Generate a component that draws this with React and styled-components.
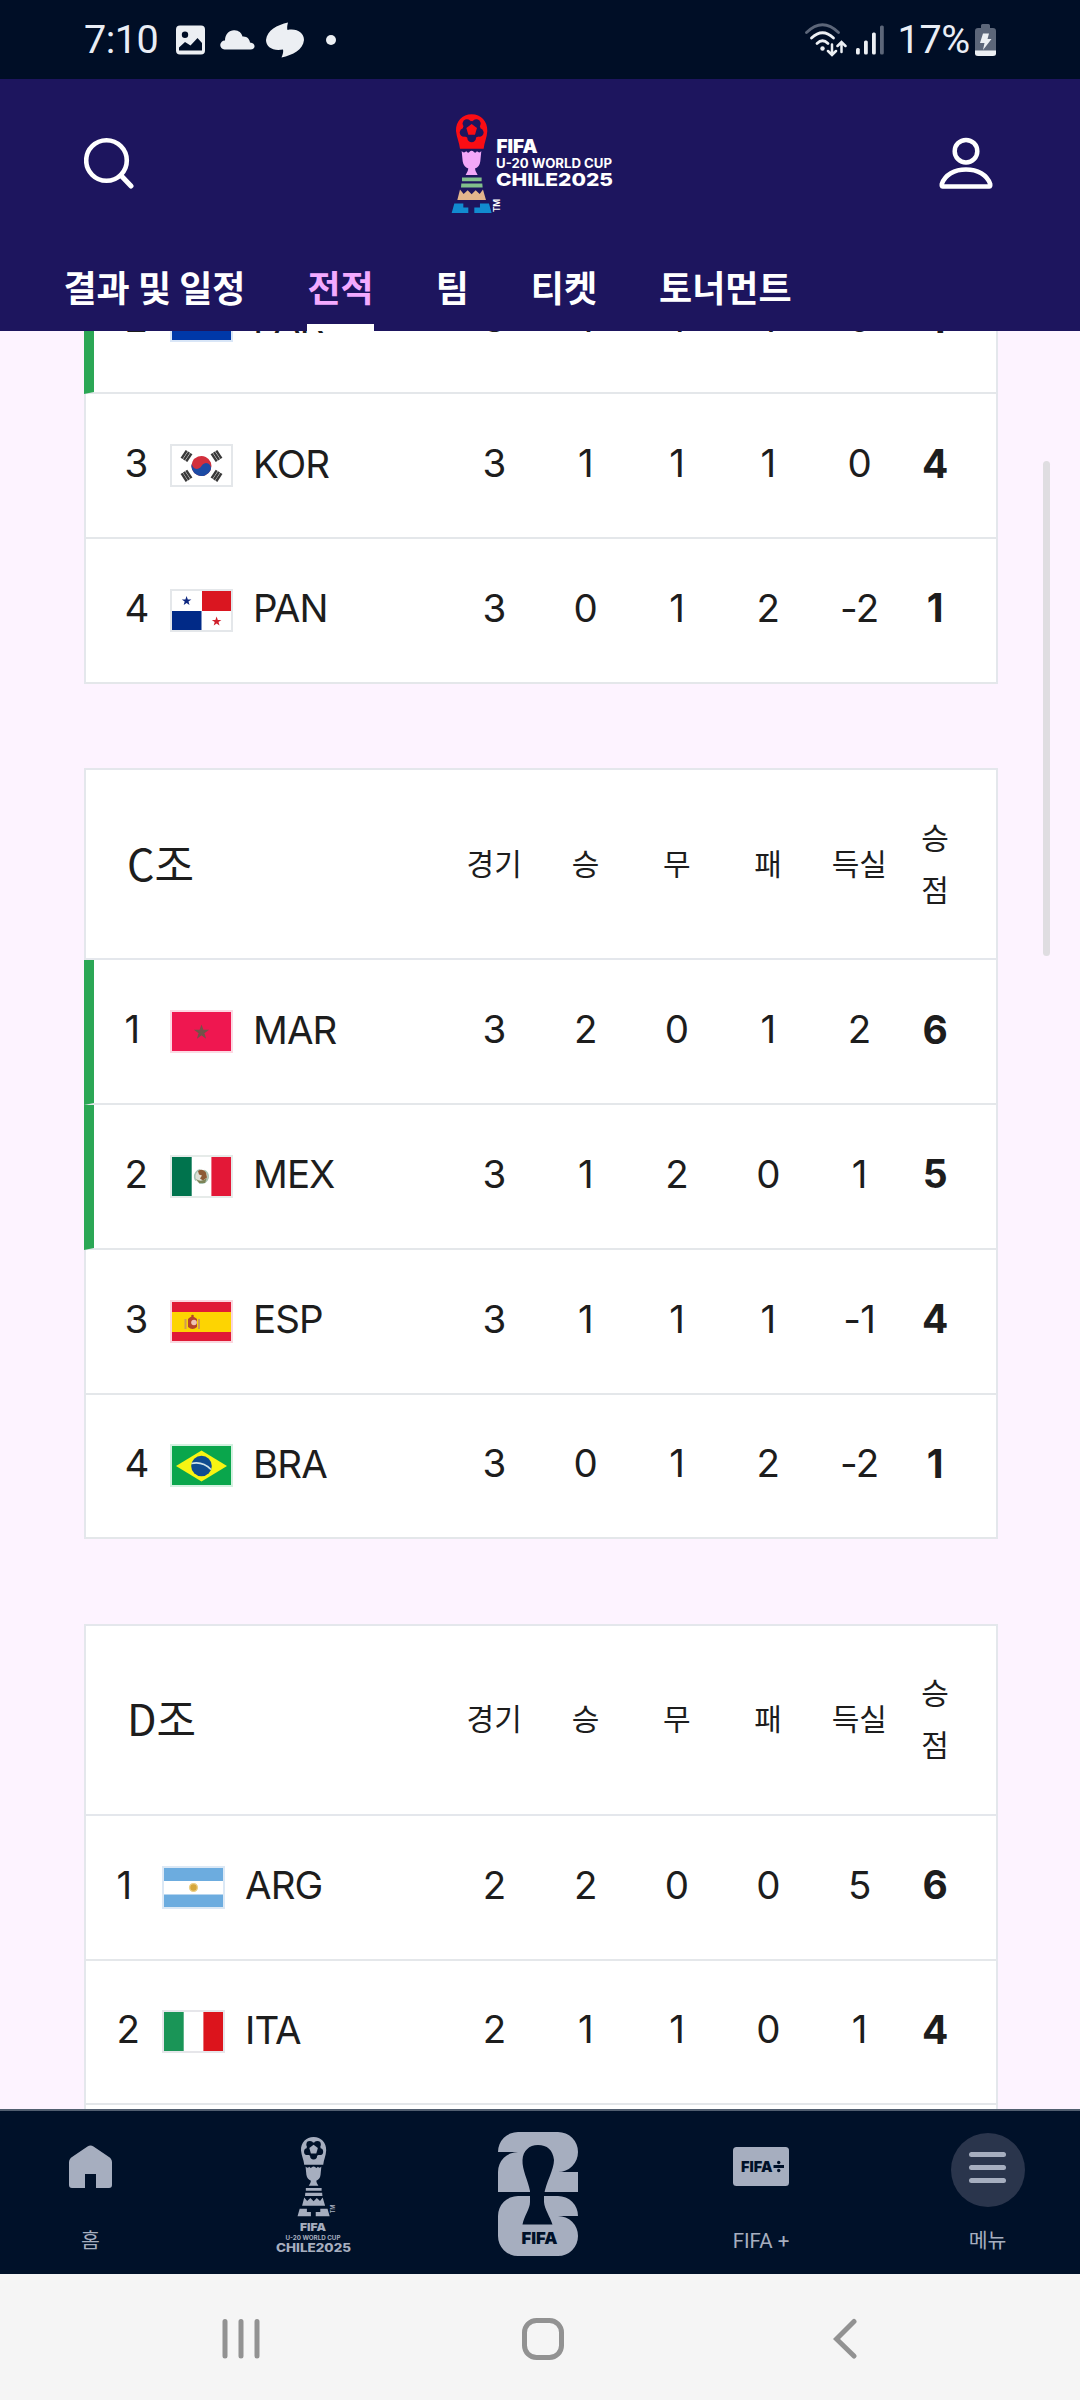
import React from "react";
import styled, { createGlobalStyle } from "styled-components";

const tabs = ["결과 및 일정", "전적", "팀", "티켓", "토너먼트"];

const columns = ["경기", "승", "무", "패", "득실"];

const groupB = [
  { rank: 2, code: "PAR", stats: [3, 1, 1, 1, 0], points: 4, up: true, edge: "#d9e6f7" },
  { rank: 3, code: "KOR", stats: [3, 1, 1, 1, 0], points: 4, edge: "#e4e7ea" },
  { rank: 4, code: "PAN", stats: [3, 0, 1, 2, -2], points: 1, edge: "#e4e7ea" },
];

const groupC = [
  { rank: 1, code: "MAR", stats: [3, 2, 0, 1, 2], points: 6, up: true, edge: "#fcd9e3" },
  { rank: 2, code: "MEX", stats: [3, 1, 2, 0, 1], points: 5, up: true, edge: "#e6ebe9" },
  { rank: 3, code: "ESP", stats: [3, 1, 1, 1, -1], points: 4, edge: "#fad7df" },
  { rank: 4, code: "BRA", stats: [3, 0, 1, 2, -2], points: 1, edge: "#d3f1e0" },
];

const groupD = [
  { rank: 1, code: "ARG", stats: [2, 2, 0, 0, 5], points: 6, edge: "#dbe8f5" },
  { rank: 2, code: "ITA", stats: [2, 1, 1, 0, 1], points: 4, edge: "#e6e6ea" },
];

const star = "0,-5 1.2,-1.6 4.8,-1.6 1.9,0.6 2.9,4 0,1.9 -2.9,4 -1.9,0.6 -4.8,-1.6 -1.2,-1.6";

const flags = {
  PAR: (
    <>
      <rect width="59" height="13" fill="#d52b1e" />
      <rect y="26" width="59" height="13" fill="#0038a8" />
    </>
  ),
  KOR: (
    <>
      <g transform="rotate(25 29.5 20)">
        <circle cx="29.5" cy="20" r="10" fill="#d22f3c" />
        <path d="M19.5 20a5 5 0 0 0 10 0a5 5 0 0 1 10 0a10 10 0 0 1-20 0z" fill="#1c4ba5" />
      </g>
      {[
        [14.5, 10, 33],
        [44.5, 10, -33],
        [14.5, 29.8, -33],
        [44.5, 29.8, 33],
      ].map(([x, y, r], i) => (
        <g key={i} transform={`translate(${x} ${y}) rotate(${r + 90})`} fill="#383838">
          <rect x="-4.7" y="-4" width="9.4" height="2.4" />
          <rect x="-4.7" y="-1.2" width="9.4" height="2.4" />
          <rect x="-4.7" y="1.6" width="9.4" height="2.4" />
        </g>
      ))}
    </>
  ),
  PAN: (
    <>
      <rect x="30" width="29" height="20" fill="#da1620" />
      <rect y="20" width="29.5" height="19" fill="#012a87" />
      <polygon points={star} transform="translate(14.6 10)" fill="#0d2680" />
      <polygon points={star} transform="translate(44.6 30.5)" fill="#d0202c" />
    </>
  ),
  MAR: (
    <>
      <rect width="59" height="39" fill="#ef1750" />
      <polygon points={star} transform="translate(29.5 20.3) scale(1.1)" fill="#735249" stroke="#735249" strokeWidth="1.4" />
    </>
  ),
  MEX: (
    <>
      <rect width="19.7" height="39" fill="#00734d" />
      <rect x="39.4" width="19.6" height="39" fill="#e31837" />
      <circle cx="29.5" cy="19.5" r="6.8" fill="#dfe0d6" stroke="#a9c3b4" strokeWidth="1.6" strokeDasharray="14 4" transform="rotate(-10 29.5 20)" />
      <path d="M26 14q5-3 8 1.500l1 5-4 3-3-2 2-3-3-1z" fill="#8d5a36" />
      <path d="M24 22q5 4 11-1l-2 5h-6z" fill="#7d8458" />
    </>
  ),
  ESP: (
    <>
      <rect width="59" height="39" fill="#e01a36" />
      <rect y="10" width="59" height="20" fill="#fdd402" />
      <path d="M12.500 17h2v10h-2zM26 17h2v10h-2z" fill="#cf9a55" />
      <path d="M16 17q4-5 9 0v8q-4.500 4-9 0z" fill="#b5442b" />
      <circle cx="22" cy="20.500" r="2.800" fill="#efc3b4" />
      <circle cx="20.5" cy="14" r="1.300" fill="#b5442b" />
    </>
  ),
  BRA: (
    <>
      <rect width="59" height="39" fill="#0aa64c" />
      <path d="M29.500 4.500L55 20L29.500 35.500L4 20z" fill="#f8f412" />
      <circle cx="29.5" cy="20" r="10.300" fill="#0f4c90" />
      <path d="M19.500 17.500q11-2.500 19.500 6" fill="none" stroke="#cfe3e8" strokeWidth="1.700" />
    </>
  ),
  ARG: (
    <>
      <rect width="59" height="13" fill="#6cacdf" />
      <rect y="26.500" width="59" height="12.500" fill="#6cacdf" />
      <circle cx="29.5" cy="19.500" r="3.900" fill="#d6a73c" stroke="#ecd08a" strokeWidth="1.400" />
    </>
  ),
  ITA: (
    <>
      <rect width="19.700" height="39" fill="#1a9557" />
      <rect x="39.400" width="19.600" height="39" fill="#dc141c" />
    </>
  ),
};

function Trophy({ width, mono, bg }) {
  const c = (color) => mono || color;
  return (
    <svg width={width} height={(width * 302) / 124} viewBox="0 0 124 302">
      <path d="M62 4C34 4 14 25 15 54C17 74 25 88 27 107H98C100 88 108 74 109 54C110 25 90 4 62 4z" fill={c("#fb0d14")} />
      <circle cx="62" cy="51" r="27" fill={bg} />
      {[90, 162, 234, 306, 18].map((deg) => {
        const a = (deg * Math.PI) / 180;
        return <circle key={deg} cx={62 + 24 * Math.cos(a)} cy={51 + 24 * Math.sin(a)} r="13" fill={bg} />;
      })}
      <polygon points="62,33 78,45 72,65 52,65 46,45" fill={c("#fb0d14")} />
      <path d="M32 114Q38 122 46 115Q51 122 55 117Q62 110 69 117Q73 122 78 115Q86 122 91 114L88 145Q86 162 72 167Q72 174 80 186H44Q52 174 52 167Q38 162 35 145z" fill={c("#f2a7f8")} />
      <path d="M33 194h59v11h-59zM31 212h63l1 12h-65z" fill={c("#82bf8b")} />
      <path d="M27 230L38 243L50 232L62 244L74 232L86 243L96 230L105 261H19z" fill={c("#e3b58c")} />
      <path d="M10 272H37V284H52V300H2zM114 272H87V284H70V300H122z" fill={c("#118bd0")} />
    </svg>
  );
}

function EventLogo() {
  return (
    <LogoRow>
      <Trophy width={41.300} bg="#1d155e" />
      <svg width="124" height="102" viewBox="0 0 124 102">
        <g fill="#fff" fontFamily="Inter, sans-serif">
          <text x="4.500" y="39.500" fontSize="18.500" fontWeight="900" textLength="41" lengthAdjust="spacingAndGlyphs">FIFA</text>
          <text x="4" y="54.500" fontSize="12.800" fontWeight="700" textLength="116" lengthAdjust="spacingAndGlyphs">U-20 WORLD CUP</text>
          <text x="4" y="73" fontSize="18" fontWeight="800" textLength="117" lengthAdjust="spacingAndGlyphs">CHILE2025</text>
          <text transform="translate(8 99) rotate(-90)" fontSize="8.500" fontWeight="600" textLength="13">TM</text>
        </g>
      </svg>
    </LogoRow>
  );
}

function StatusBar() {
  return (
    <StatusWrap>
      <Clock>7:10</Clock>
      <StatusIcon $gap={17} width="29" height="30" viewBox="0 0 29 30">
        <path fillRule="evenodd" d="M4 0.500H25a4 4 0 0 1 4 4V25.500a4 4 0 0 1-4 4H4a4 4 0 0 1-4-4V4.500a4 4 0 0 1 4-4zM9 6.500a3.200 3.200 0 1 0 0 6.400a3.200 3.200 0 1 0 0-6.400zM3 25.500H26V18L21.500 13L14.500 20.500L9 17L3 22.500z" fill="#eceff3" />
      </StatusIcon>
      <StatusIcon $gap={15} width="35" height="20" viewBox="0 0 35 20">
        <path d="M4.500 19.500a4.500 4.500 0 0 1 0.500-9C5 4 9.500 0 14.500 0.300C19 0.500 21.500 3 22.500 6.500C27 6 29.500 9 30 12.500C36 13 36 19.500 30.500 19.500z" fill="#eceff3" />
      </StatusIcon>
      <StatusIcon $gap={10.500} width="38" height="36" viewBox="0 0 38 36">
        <path d="M22 0.500C21 4 21 6.500 21.500 8C31 6 38 11 38 18C37 28 27 33 15.500 35.500C17 32 17.500 29.500 17 27.500C7 29.500 0 25 0 18C1 8 11 3 22 0.500z" fill="#eceff3" />
      </StatusIcon>
      <Dot />
      <Spacer />
      <StatusIcon $gap={0} width="42" height="34" viewBox="0 0 42 34">
        <g fill="none" strokeLinecap="round" strokeWidth="2.800">
          <path d="M1.500 9.500Q17.500-6 33.500 9.500" stroke="#5c6679" />
          <path d="M6.500 15Q17.500 4.500 28.500 15M12 20.500Q17.500 15 23 20.500" stroke="#eceff3" />
          <path d="M27 21.500V31.500M23 28L27 32L31 28M36.500 29V19.500M32.500 23L36.500 19L40.500 23" stroke="#eceff3" strokeWidth="2.500" />
        </g>
        <circle cx="17.500" cy="25.500" r="2.200" fill="#eceff3" />
      </StatusIcon>
      <StatusIcon $gap={8.500} width="28" height="30" viewBox="0 0 28 30">
        <rect x="0" y="23" width="3.800" height="6.500" rx="1.500" fill="#eceff3" />
        <rect x="8" y="15.500" width="3.800" height="14" rx="1.500" fill="#eceff3" />
        <rect x="16" y="7.500" width="3.800" height="22" rx="1.500" fill="#eceff3" />
        <rect x="24" y="0.500" width="3.800" height="29" rx="1.500" fill="#5c6679" />
      </StatusIcon>
      <Percent>17%</Percent>
      <StatusIcon $gap={5} width="21" height="34" viewBox="0 0 21 34">
        <path d="M6 2.500Q6 1 7.500 1H13.500Q15 1 15 2.500V5H18Q21 5 21 8V28H0V8Q0 5 3 5H6z" fill="#5c6679" />
        <path d="M0 27.500H21V30.500Q21 33 18 33H3Q0 33 0 30.500z" fill="#eceff3" />
        <path d="M8 10.500H14L12.500 16H16.500L8 27L9.500 20H5z" fill="#eceff3" />
      </StatusIcon>
    </StatusWrap>
  );
}

function TeamRow({ team, inset }) {
  const { rank, code, stats, points, up, edge } = team;
  return (
    <Row $up={up} $inset={inset}>
      <Team>
        <Rank>{rank}</Rank>
        <Flag $edge={edge}>
          <svg width="59" height="39" viewBox="0 0 59 39">{flags[code]}</svg>
        </Flag>
        <Code>{code}</Code>
      </Team>
      {stats.map((value, i) => (
        <Stat key={i}>{value}</Stat>
      ))}
      <Points>{points}</Points>
    </Row>
  );
}

function GroupCard({ title, teams, inset = 38.5, more }) {
  return (
    <Card $noTop={!title} $more={more}>
      {title && (
        <CardHead>
          <GroupName>{title}</GroupName>
          {columns.map((name) => (
            <HeadCell key={name}>{name}</HeadCell>
          ))}
          <PointsHead>승점</PointsHead>
        </CardHead>
      )}
      {teams.map((team) => (
        <TeamRow key={team.rank} team={team} inset={inset} />
      ))}
    </Card>
  );
}

function BottomNav() {
  return (
    <NavWrap>
      <NavItem>
        <NavIcon>
          <svg width="43" height="43" viewBox="0 0 43 43">
            <path d="M18.500 1.500Q21.500-0.500 24.500 1.500L40 12Q43 14 43 17.500V40Q43 43 40 43H27V29H16V43H3Q0 43 0 40V17.500Q0 14 3 12z" fill="#a6aebf" />
          </svg>
        </NavIcon>
        <NavLabel>홈</NavLabel>
      </NavItem>
      <NavItem>
        <NavLogo>
          <Trophy width={33.200} mono="#a6aebf" bg="#001129" />
          <svg width="78" height="40" viewBox="0 0 78 40">
            <g fill="#a6aebf" fontFamily="Inter, sans-serif" textAnchor="middle">
              <text x="38" y="14" fontSize="11" fontWeight="900" textLength="26" lengthAdjust="spacingAndGlyphs">FIFA</text>
              <text x="38" y="22.700" fontSize="6.200" fontWeight="700" textLength="55" lengthAdjust="spacingAndGlyphs">U-20 WORLD CUP</text>
              <text x="38.500" y="34.800" fontSize="11.500" fontWeight="800" textLength="75" lengthAdjust="spacingAndGlyphs">CHILE2025</text>
            </g>
          </svg>
          <NavTm>TM</NavTm>
        </NavLogo>
      </NavItem>
      <NavItem>
        <Emblem width="80" height="124" viewBox="0 0 80 124">
          <path d="M20 0H60A20 20 0 0 1 60 40H80V60H0V40A20 20 0 0 1 20 20H0A20 20 0 0 1 20 0z" fill="#a6aebf" />
          <path d="M20 64H60A20 20 0 0 1 80 84H60A20 20 0 0 1 60 124H20A20 20 0 0 1 0 104V84A20 20 0 0 1 20 64z" fill="#a6aebf" />
          <path d="M40 13C31 13 25 19 24.500 28C24 38 30 48 32 59V70C32 77 26 84 24.500 92.500H54.500C52 85 46.500 77 46 70V63C48 50 56 38 56 28C55 18 49 13 40 13z" fill="#001129" />
          <text x="23.500" y="112.300" fontSize="16.500" fontWeight="900" fontFamily="Inter, sans-serif" textLength="36" lengthAdjust="spacingAndGlyphs" fill="#001129">FIFA</text>
        </Emblem>
      </NavItem>
      <NavItem>
        <NavIcon>
          <svg width="56" height="39" viewBox="0 0 56 39">
            <rect width="56" height="39" rx="3.500" fill="#a6aebf" />
            <text x="8" y="24.700" fontSize="15" fontWeight="900" fontFamily="Inter, sans-serif" textLength="31.500" lengthAdjust="spacingAndGlyphs" fill="#001129">FIFA</text>
            <path d="M40.500 18h10.500v3h-10.500z" fill="#001129" />
            <circle cx="45.700" cy="15.500" r="1.700" fill="#001129" />
            <circle cx="45.700" cy="23.500" r="1.700" fill="#001129" />
          </svg>
        </NavIcon>
        <NavLabel>FIFA +</NavLabel>
      </NavItem>
      <NavItem>
        <MenuCircle>
          <MenuLine />
          <MenuLine />
          <MenuLine />
        </MenuCircle>
        <NavLabel>메뉴</NavLabel>
      </NavItem>
    </NavWrap>
  );
}

function SystemBar() {
  return (
    <SystemWrap>
      <svg width="38" height="42" viewBox="0 0 38 42">
        <path d="M3 3.500V38M19 3.500V38M35 3.500V38" stroke="#929292" strokeWidth="5" strokeLinecap="round" />
      </svg>
      <svg width="42" height="42" viewBox="0 0 42 42">
        <rect x="2.500" y="2.500" width="37" height="37" rx="12" fill="none" stroke="#929292" strokeWidth="5" />
      </svg>
      <svg width="24" height="42" viewBox="0 0 24 42">
        <path d="M21 3.500L3.500 21L21 38" fill="none" stroke="#929292" strokeWidth="5" strokeLinecap="round" />
      </svg>
    </SystemWrap>
  );
}

function App() {
  return (
    <Screen>
      <GlobalStyle />
      <StatusBar />
      <Header>
        <TopRow>
          <svg width="50" height="52" viewBox="0 0 50 52">
            <circle cx="22.500" cy="23.500" r="20.300" fill="none" stroke="#fff" strokeWidth="4.600" />
            <path d="M37 38.500L47 49" stroke="#fff" strokeWidth="5" strokeLinecap="round" />
          </svg>
          <EventLogo />
          <svg width="54" height="53" viewBox="0 0 54 53">
            <circle cx="27" cy="14.200" r="11.300" fill="none" stroke="#fff" strokeWidth="4.500" />
            <path d="M3.500 49.500Q2.500 49.500 2.800 47C6 37.500 15.500 32.500 27 32.500C38.500 32.500 48 37.500 51.200 47Q51.500 49.500 50.500 49.500z" fill="none" stroke="#fff" strokeWidth="4.500" strokeLinejoin="round" />
          </svg>
        </TopRow>
        <Tabs>
          {tabs.map((name) => (
            <Tab key={name} $active={name === "전적"}>
              {name}
            </Tab>
          ))}
        </Tabs>
      </Header>
      <Content>
        <Groups>
          <GroupCard teams={groupB} />
          <GroupCard title="C조" teams={groupC} />
          <GroupCard title="D조" teams={groupD} inset={30.5} more />
        </Groups>
        <ScrollThumb />
      </Content>
      <BottomNav />
      <SystemBar />
    </Screen>
  );
}

const GlobalStyle = createGlobalStyle`
  * {
    box-sizing: border-box;
  }
  body {
    margin: 0;
  }
  svg {
    display: block;
    flex-shrink: 0;
  }
`;

const Screen = styled.div`
  width: 1080px;
  height: 2400px;
  display: flex;
  flex-direction: column;
  overflow: hidden;
  background-color: #fdf3ff;
  color: #1d1d1d;
  font-family: Inter, "Noto Sans CJK KR", sans-serif;
`;

const StatusWrap = styled.div`
  height: 79px;
  flex-shrink: 0;
  padding: 0 84px;
  display: flex;
  align-items: center;
  background-color: #000e26;
  color: #e9edf5;
  font-family: Roboto, sans-serif;
  font-size: 39.5px;
`;

const Clock = styled.div`
  width: 75px;
  letter-spacing: -0.5px;
  white-space: nowrap;
`;

const StatusIcon = styled.svg`
  margin-left: ${(props) => props.$gap}px;
`;

const Dot = styled.div`
  width: 10px;
  height: 10px;
  margin-left: 22px;
  border-radius: 50%;
  background-color: #eceff3;
`;

const Spacer = styled.div`
  flex: 1;
`;

const Percent = styled.div`
  margin-left: 14px;
  letter-spacing: -0.3px;
`;

const Header = styled.header`
  height: 252px;
  flex-shrink: 0;
  background-color: #1d155e;
`;

const TopRow = styled.div`
  height: 168px;
  padding: 0 87px 0 84px;
  display: grid;
  grid-template-columns: 367px 1fr auto;
  align-items: center;
`;

const LogoRow = styled.div`
  padding-top: 2px;
  display: flex;
`;

const Tabs = styled.nav`
  height: 84px;
  padding-left: 63.5px;
  display: flex;
  gap: 62px;
`;

const Tab = styled.div`
  padding-top: 1px;
  display: flex;
  align-items: center;
  border-bottom: 7px solid ${(props) => (props.$active ? "#fff" : "transparent")};
  color: ${(props) => (props.$active ? "#f3aaff" : "#fff")};
  font-family: "Noto Sans CJK KR", sans-serif;
  font-size: 36px;
  font-weight: 700;
  white-space: nowrap;
`;

const Content = styled.main`
  height: 1778px;
  flex-shrink: 0;
  position: relative;
  overflow: hidden;
`;

const Groups = styled.div`
  margin-top: -81.5px;
  padding: 0 82px 0 84px;
  display: flex;
  flex-direction: column;
  gap: 84.25px;
`;

const Card = styled.section`
  padding-bottom: ${(props) => (props.$more ? 290 : 0)}px;
  border: 2px solid #e4e7ec;
  border-top-width: ${(props) => (props.$noTop ? 0 : 2)}px;
  border-bottom: 0;
  background-color: #fff;
`;

const CardHead = styled.div`
  height: 190.25px;
  padding: 0 31px 5px 41px;
  display: grid;
  grid-template-columns: 1fr repeat(5, 91.3px) 60px;
  align-items: center;
  border-bottom: 2px solid #e4e7ec;
  font-family: "Noto Sans CJK KR", sans-serif;
`;

const GroupName = styled.h2`
  margin: 0;
  font-size: 43px;
  font-weight: 400;
`;

const HeadCell = styled.div`
  font-size: 30px;
  text-align: center;
`;

const PointsHead = styled(HeadCell)`
  width: 32px;
  justify-self: center;
  line-height: 52px;
  word-break: break-all;
`;

/* 진출권 팀은 왼쪽에 초록색 띠 */
const Row = styled.div`
  height: 144.75px;
  margin-left: ${(props) => (props.$up ? -2 : 0)}px;
  padding-left: ${(props) => (props.$up ? props.$inset - 8 : props.$inset)}px;
  padding-right: 31px;
  display: grid;
  grid-template-columns: 1fr repeat(5, 91.3px) 60px;
  align-items: center;
  border-left: ${(props) => (props.$up ? "10px solid #2ba755" : "0")};
  border-bottom: 2px solid #e4e7ea;
  font-size: 38.5px;
`;

const Team = styled.div`
  display: flex;
  align-items: center;
`;

const Rank = styled.div`
  width: 45px;
  padding-bottom: 5px;
`;

const Flag = styled.div`
  width: 63px;
  height: 43px;
  border: 2px solid ${(props) => props.$edge};
  background-color: #fff;
`;

const Code = styled.div`
  margin-left: 20.5px;
  padding-bottom: 4px;
  letter-spacing: -0.9px;
`;

const Stat = styled.div`
  padding-bottom: 5px;
  letter-spacing: -0.5px;
  text-align: center;
`;

const Points = styled(Stat)`
  font-size: 39px;
  font-weight: 700;
`;

const ScrollThumb = styled.div`
  position: absolute;
  top: 130px;
  right: 30px;
  width: 7px;
  height: 495px;
  border-radius: 4px;
  background-color: #dfdde1;
`;

const NavWrap = styled.nav`
  height: 165px;
  flex-shrink: 0;
  display: grid;
  grid-template-columns: repeat(4, 181px) 187px;
  column-gap: 42.5px;
  border-top: 2px solid #525f70;
  background-color: #001129;
  color: #a6aebf;
`;

const NavItem = styled.div`
  height: 163px;
  display: flex;
  flex-direction: column;
  align-items: center;
`;

const NavIcon = styled.div`
  height: 110px;
  display: flex;
  align-items: center;
`;

const NavLabel = styled.div`
  font-family: Roboto, "Noto Sans CJK KR", sans-serif;
  font-size: 20.5px;
  line-height: 40px;
`;

const NavLogo = styled.div`
  position: relative;
  padding-top: 25px;
  display: flex;
  flex-direction: column;
  align-items: center;
`;

const NavTm = styled.div`
  position: absolute;
  left: 54px;
  top: 94px;
  font-size: 5.5px;
  font-weight: 600;
  line-height: 8px;
  transform: rotate(-90deg);
`;

const Emblem = styled.svg`
  margin-top: 21px;
`;

const MenuCircle = styled.div`
  width: 74px;
  height: 74px;
  margin: 22px 0 14px;
  display: flex;
  flex-direction: column;
  align-items: center;
  justify-content: center;
  gap: 8px;
  padding-bottom: 6px;
  border-radius: 50%;
  background-color: #2a354c;
`;

const MenuLine = styled.div`
  width: 37px;
  height: 5px;
  border-radius: 3px;
  background-color: #a6aebf;
`;

const SystemWrap = styled.div`
  flex: 1;
  padding: 4px 0 0 90px;
  display: grid;
  grid-template-columns: repeat(3, 302px);
  align-items: center;
  justify-items: center;
  background-color: #f5f5f5;
`;

export default App;
